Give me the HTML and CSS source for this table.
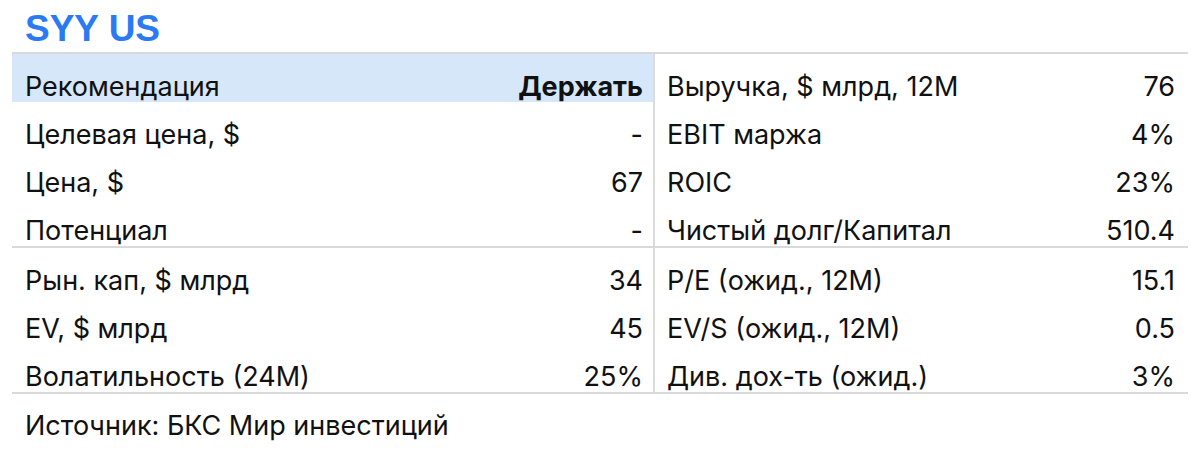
FILE: index.html
```html
<!DOCTYPE html>
<html lang="ru">
<head>
<meta charset="utf-8">
<link rel="stylesheet" href="styles.css">
</head>
<body>
<div class="page">
  <h1 class="title">SYY US</h1>
  <div class="table">
    <div class="block">
      <div class="col left">
        <div class="row hl"><span>Рекомендация</span><span class="b">Держать</span></div>
        <div class="row"><span>Целевая цена, $</span><span>-</span></div>
        <div class="row"><span>Цена, $</span><span>67</span></div>
        <div class="row"><span>Потенциал</span><span>-</span></div>
      </div>
      <div class="col right">
        <div class="row"><span>Выручка, $ млрд, 12M</span><span>76</span></div>
        <div class="row"><span>EBIT маржа</span><span>4%</span></div>
        <div class="row"><span>ROIC</span><span>23%</span></div>
        <div class="row"><span>Чистый долг/Капитал</span><span>510.4</span></div>
      </div>
    </div>
    <div class="block">
      <div class="col left">
        <div class="row"><span>Рын. кап, $ млрд</span><span>34</span></div>
        <div class="row"><span>EV, $ млрд</span><span>45</span></div>
        <div class="row"><span>Волатильность (24M)</span><span>25%</span></div>
      </div>
      <div class="col right">
        <div class="row"><span>P/E (ожид., 12M)</span><span>15.1</span></div>
        <div class="row"><span>EV/S (ожид., 12M)</span><span>0.5</span></div>
        <div class="row"><span>Див. дох-ть (ожид.)</span><span>3%</span></div>
      </div>
    </div>
  </div>
  <p class="source">Источник: БКС Мир инвестиций</p>
</div>
</body>
</html>
```
FILE: styles.css
```css
* { box-sizing: border-box; }
html, body { margin: 0; padding: 0; background: #fff; }
body {
  font-family: Inter, "Liberation Sans", sans-serif;
  color: #111;
  width: 1200px;
  height: 457px;
  overflow: hidden;
}
.page {
  padding: 0 12px;
}
.title {
  margin: 0;
  height: 52px;
  padding: 9px 0 0 13px;
  font-family: "Liberation Sans", Arial, sans-serif;
  font-weight: 700;
  font-size: 37px;
  line-height: 40px;
  color: #2a7af3;
}
.table {
  width: 1176px;
  border-top: 2px solid #d9d9d9;
}
.block {
  display: flex;
  border-bottom: 2px solid #d9d9d9;
}
.col {
  display: flex;
  flex-direction: column;
}
.left {
  width: 643px;
  border-right: 2px solid #dcdcdc;
}
.right {
  flex: 1;
}
.row {
  height: 48px;
  display: flex;
  justify-content: space-between;
  align-items: flex-end;
  font-size: 27px;
  line-height: 30px;
  padding-bottom: 0;
}
.left .row { padding-left: 13px; padding-right: 10px; }
.right .row { padding-left: 12px; padding-right: 13px; }
.hl { background: #d5e7f9; }
.b { font-weight: 700; }
.source {
  margin: 0;
  padding: 17px 0 0 13px;
  font-size: 27px;
  line-height: 30px;
}
```
